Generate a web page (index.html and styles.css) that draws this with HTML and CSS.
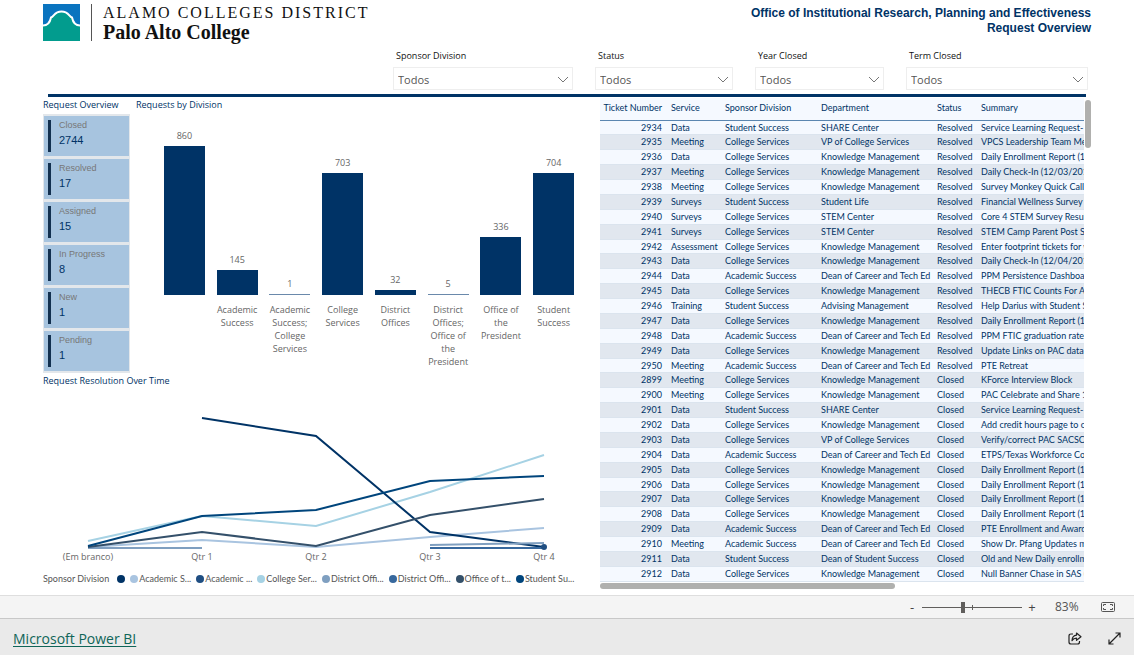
FILE: index.html
```html
<!DOCTYPE html>
<html lang="en">
<head>
<meta charset="utf-8">
<meta name="viewport" content="width=device-width, initial-scale=1">
<title>Request Overview</title>
<link rel="stylesheet" href="styles.css">
</head>
<body>
<main class="report">
  <header class="header">
    <div class="brand">
      <svg class="brand-mark" viewBox="0 0 37 37" aria-hidden="true">
        <rect width="37" height="37" fill="#0a74bf"/>
        <path d="M0 37V21.500C5 21.500 7 18.500 8 13.500C11 12.500 11.500 7.500 18.500 7.500S26 12.500 29 13.500C30 18.500 32 21.500 37 21.500V37Z" fill="#029c8e"/>
        <path d="M0 21.500C5 21.500 7 18.500 8 13.500C11 12.500 11.500 7.500 18.500 7.500S26 12.500 29 13.500C30 18.500 32 21.500 37 21.500" fill="none" stroke="#fff" stroke-width="2"/>
      </svg>
      <div class="brand-text">
        <span class="brand-district">ALAMO COLLEGES DISTRICT</span>
        <span class="brand-college">Palo Alto College</span>
      </div>
    </div>
    <h1 class="title">Office of Institutional Research, Planning and Effectiveness<br>Request Overview</h1>
  </header>

  <form class="filters">
    <div class="filter">
      <label for="f-division">Sponsor Division</label>
      <div class="picker"><select id="f-division"><option>Todos</option></select><svg class="chevron" viewBox="0 0 12 7" aria-hidden="true"><path d="M1 1l5 5 5-5"/></svg></div>
    </div>
    <div class="filter">
      <label for="f-status">Status</label>
      <div class="picker"><select id="f-status"><option>Todos</option></select><svg class="chevron" viewBox="0 0 12 7" aria-hidden="true"><path d="M1 1l5 5 5-5"/></svg></div>
    </div>
    <div class="filter">
      <label for="f-year">Year Closed</label>
      <div class="picker"><select id="f-year"><option>Todos</option></select><svg class="chevron" viewBox="0 0 12 7" aria-hidden="true"><path d="M1 1l5 5 5-5"/></svg></div>
    </div>
    <div class="filter">
      <label for="f-term">Term Closed</label>
      <div class="picker"><select id="f-term"><option>Todos</option></select><svg class="chevron" viewBox="0 0 12 7" aria-hidden="true"><path d="M1 1l5 5 5-5"/></svg></div>
    </div>
  </form>

  <div class="rule"></div>

  <div class="content">
    <div class="charts">
      <div class="top-row">
        <section class="overview">
          <h2>Request Overview</h2>
          <div class="cards">
            <div class="card"><span class="card-label">Closed</span><span class="card-value">2744</span></div>
            <div class="card"><span class="card-label">Resolved</span><span class="card-value">17</span></div>
            <div class="card"><span class="card-label">Assigned</span><span class="card-value">15</span></div>
            <div class="card"><span class="card-label">In Progress</span><span class="card-value">8</span></div>
            <div class="card"><span class="card-label">New</span><span class="card-value">1</span></div>
            <div class="card"><span class="card-label">Pending</span><span class="card-value">1</span></div>
          </div>
        </section>
        <section class="division">
          <h2>Requests by Division</h2>
          <div class="bars">
            <div class="bar-col"><span>860</span><div class="bar" style="height:149px"></div></div>
            <div class="bar-col"><span>145</span><div class="bar" style="height:25px"></div></div>
            <div class="bar-col"><span>1</span><div class="bar bar-thin" style="height:1px"></div></div>
            <div class="bar-col"><span>703</span><div class="bar" style="height:122px"></div></div>
            <div class="bar-col"><span>32</span><div class="bar" style="height:5px"></div></div>
            <div class="bar-col"><span>5</span><div class="bar bar-thin" style="height:1px"></div></div>
            <div class="bar-col"><span>336</span><div class="bar" style="height:58px"></div></div>
            <div class="bar-col"><span>704</span><div class="bar" style="height:122px"></div></div>
          </div>
          <div class="bar-labels">
            <span></span>
            <span>Academic<br>Success</span>
            <span>Academic<br>Success;<br>College<br>Services</span>
            <span>College<br>Services</span>
            <span>District<br>Offices</span>
            <span>District<br>Offices;<br>Office of<br>the<br>President</span>
            <span>Office of<br>the<br>President</span>
            <span>Student<br>Success</span>
          </div>
        </section>
      </div>

      <section class="trend">
        <h2>Request Resolution Over Time</h2>
        <div class="plot">
          <svg class="lines" viewBox="0 0 570 162" preserveAspectRatio="none" role="img" aria-label="Requests per quarter by sponsor division">
            <polyline points="57,159 171,152 285,159 399,149 513,140" stroke="#a9c4e0"/>
            <polyline points="57,153 171,128 285,138 399,104 513,67" stroke="#a6d2e4"/>
            <polyline points="171,30 285,48 399,144 513,159" stroke="#003366"/>
            <polyline points="57,160 171,160" stroke="#7f9fc0"/>
            <polyline points="399,157 513,155" stroke="#7f9fc0"/>
            <polyline points="399,160 513,160" stroke="#37689d"/>
            <polyline points="57,159 171,144 285,158 399,127 513,111" stroke="#34506a"/>
            <polyline points="57,158 171,128 285,122 399,93 513,88" stroke="#00457c"/>
            <circle cx="513" cy="159" r="3" fill="#1f4e82"/>
          </svg>
          <div class="axis"><span>(Em branco)</span><span>Qtr 1</span><span>Qtr 2</span><span>Qtr 3</span><span>Qtr 4</span></div>
        </div>
        <div class="legend">
          <span class="legend-title">Sponsor Division</span>
          <ul>
            <li class="c1"></li>
            <li class="c2">Academic S...</li>
            <li class="c3">Academic ...</li>
            <li class="c4">College Ser...</li>
            <li class="c5">District Offi...</li>
            <li class="c6">District Offi...</li>
            <li class="c7">Office of t...</li>
            <li class="c8">Student Su...</li>
          </ul>
        </div>
      </section>
    </div>

    <section class="tickets">
      <div class="table-box">
        <table>
          <colgroup><col class="w-ticket"><col class="w-service"><col class="w-division"><col class="w-dept"><col class="w-status"><col class="w-summary"></colgroup>
          <thead><tr><th>Ticket Number</th><th>Service</th><th>Sponsor Division</th><th>Department</th><th>Status</th><th>Summary</th></tr></thead>
          <tbody>
            <tr><td>2934</td><td>Data</td><td>Student Success</td><td>SHARE Center</td><td>Resolved</td><td>Service Learning Request-</td></tr>
            <tr><td>2935</td><td>Meeting</td><td>College Services</td><td>VP of College Services</td><td>Resolved</td><td>VPCS Leadership Team Me</td></tr>
            <tr><td>2936</td><td>Data</td><td>College Services</td><td>Knowledge Management</td><td>Resolved</td><td>Daily Enrollment Report (1</td></tr>
            <tr><td>2937</td><td>Meeting</td><td>College Services</td><td>Knowledge Management</td><td>Resolved</td><td>Daily Check-In (12/03/2018</td></tr>
            <tr><td>2938</td><td>Meeting</td><td>College Services</td><td>Knowledge Management</td><td>Resolved</td><td>Survey Monkey Quick Call</td></tr>
            <tr><td>2939</td><td>Surveys</td><td>Student Success</td><td>Student Life</td><td>Resolved</td><td>Financial Wellness Survey R</td></tr>
            <tr><td>2940</td><td>Surveys</td><td>College Services</td><td>STEM Center</td><td>Resolved</td><td>Core 4 STEM Survey Result</td></tr>
            <tr><td>2941</td><td>Surveys</td><td>College Services</td><td>STEM Center</td><td>Resolved</td><td>STEM Camp Parent Post Su</td></tr>
            <tr><td>2942</td><td>Assessment</td><td>College Services</td><td>Knowledge Management</td><td>Resolved</td><td>Enter footprint tickets for w</td></tr>
            <tr><td>2943</td><td>Data</td><td>College Services</td><td>Knowledge Management</td><td>Resolved</td><td>Daily Check-In (12/04/2018</td></tr>
            <tr><td>2944</td><td>Data</td><td>Academic Success</td><td>Dean of Career and Tech Ed</td><td>Resolved</td><td>PPM Persistence Dashboar</td></tr>
            <tr><td>2945</td><td>Data</td><td>College Services</td><td>Knowledge Management</td><td>Resolved</td><td>THECB FTIC Counts For AC</td></tr>
            <tr><td>2946</td><td>Training</td><td>Student Success</td><td>Advising Management</td><td>Resolved</td><td>Help Darius with Student S</td></tr>
            <tr><td>2947</td><td>Data</td><td>College Services</td><td>Knowledge Management</td><td>Resolved</td><td>Daily Enrollment Report (1</td></tr>
            <tr><td>2948</td><td>Data</td><td>Academic Success</td><td>Dean of Career and Tech Ed</td><td>Resolved</td><td>PPM FTIC graduation rates</td></tr>
            <tr><td>2949</td><td>Data</td><td>College Services</td><td>Knowledge Management</td><td>Resolved</td><td>Update Links on PAC data</td></tr>
            <tr><td>2950</td><td>Meeting</td><td>Academic Success</td><td>Dean of Career and Tech Ed</td><td>Resolved</td><td>PTE Retreat</td></tr>
            <tr><td>2899</td><td>Meeting</td><td>College Services</td><td>Knowledge Management</td><td>Closed</td><td>KForce Interview Block</td></tr>
            <tr><td>2900</td><td>Meeting</td><td>College Services</td><td>Knowledge Management</td><td>Closed</td><td>PAC Celebrate and Share 1</td></tr>
            <tr><td>2901</td><td>Data</td><td>Student Success</td><td>SHARE Center</td><td>Closed</td><td>Service Learning Request-</td></tr>
            <tr><td>2902</td><td>Data</td><td>College Services</td><td>Knowledge Management</td><td>Closed</td><td>Add credit hours page to c</td></tr>
            <tr><td>2903</td><td>Data</td><td>College Services</td><td>VP of College Services</td><td>Closed</td><td>Verify/correct PAC SACSCC</td></tr>
            <tr><td>2904</td><td>Data</td><td>Academic Success</td><td>Dean of Career and Tech Ed</td><td>Closed</td><td>ETPS/Texas Workforce Con</td></tr>
            <tr><td>2905</td><td>Data</td><td>College Services</td><td>Knowledge Management</td><td>Closed</td><td>Daily Enrollment Report (1</td></tr>
            <tr><td>2906</td><td>Data</td><td>College Services</td><td>Knowledge Management</td><td>Closed</td><td>Daily Enrollment Report (1</td></tr>
            <tr><td>2907</td><td>Data</td><td>College Services</td><td>Knowledge Management</td><td>Closed</td><td>Daily Enrollment Report (1</td></tr>
            <tr><td>2908</td><td>Data</td><td>College Services</td><td>Knowledge Management</td><td>Closed</td><td>Daily Enrollment Report (1</td></tr>
            <tr><td>2909</td><td>Data</td><td>Academic Success</td><td>Dean of Career and Tech Ed</td><td>Closed</td><td>PTE Enrollment and Award</td></tr>
            <tr><td>2910</td><td>Meeting</td><td>Academic Success</td><td>Dean of Career and Tech Ed</td><td>Closed</td><td>Show Dr. Pfang Updates m</td></tr>
            <tr><td>2911</td><td>Data</td><td>Student Success</td><td>Dean of Student Success</td><td>Closed</td><td>Old and New Daily enrollm</td></tr>
            <tr><td>2912</td><td>Data</td><td>College Services</td><td>Knowledge Management</td><td>Closed</td><td>Null Banner Chase in SAS (</td></tr>
          </tbody>
        </table>
      </div>
      <div class="scroll-y"></div>
      <div class="scroll-x"></div>
    </section>
  </div>
</main>

<div class="zoombar">
  <button type="button" aria-label="Zoom out">-</button>
  <div class="slider"><input type="range" min="0" max="100" value="41" aria-label="Zoom"><i class="tick"></i></div>
  <button type="button" aria-label="Zoom in">+</button>
  <span class="zoom-value">83%</span>
  <button type="button" class="fit" aria-label="Fit to page">
    <svg width="14" height="10" viewBox="0 0 14 10" fill="none" stroke="#555"><rect x=".5" y=".5" width="13" height="9" rx="1"/><path d="M5 2.500H2.500V4M9 2.500h2.500V4M5 7.500H2.500V6M9 7.500h2.500V6"/></svg>
  </button>
</div>

<footer class="footer">
  <a href="#">Microsoft Power BI</a>
  <div class="actions">
    <button type="button" aria-label="Share">
      <svg width="14" height="13" viewBox="0 0 14 13" fill="none" stroke="#222" stroke-width="1.200" stroke-linejoin="round"><path d="M5 2H3Q1 2 1 4v6q0 2 2 2h6.500q2 0 2-2V9"/><path d="M8.500 1l4.500 3.700L8.500 8.300V6.200Q5.500 6.200 4 8.700 4.300 3.500 8.500 3.200Z"/></svg>
    </button>
    <button type="button" aria-label="Full screen">
      <svg width="13" height="13" viewBox="0 0 13 13" fill="none" stroke="#222" stroke-width="1.200"><path d="M1 12L12 1M7.500 1H12v4.500M1 7.500V12h4.500"/></svg>
    </button>
  </div>
</footer>
</body>
</html>
```
FILE: styles.css
```css
* { box-sizing: border-box; }

body {
  margin: 0;
  min-height: 100vh;
  display: flex;
  flex-direction: column;
  background: #fff;
  color: #003366;
  font-family: "Open Sans", "Noto Sans", sans-serif;
  font-size: 9px;
}

h1, h2, ul { margin: 0; padding: 0; }
h2 { font-size: 9px; font-weight: 400; line-height: 14px; white-space: nowrap; }

button {
  border: 0;
  padding: 0;
  background: none;
  color: #444;
  font-family: inherit;
  display: flex;
  align-items: center;
  justify-content: center;
}

.report { flex: 1; padding: 4px 43px 0; }

/* Header */
.header { display: flex; justify-content: space-between; height: 46px; }
.brand { display: flex; align-items: flex-start; }
.brand-mark { width: 37px; height: 37px; }
.brand-text {
  display: flex;
  flex-direction: column;
  height: 37px;
  margin-left: 11px;
  padding-left: 11px;
  border-left: 1px solid #555;
  color: #111;
  font-family: "Liberation Serif", serif;
  white-space: nowrap;
}
.brand-district { font-size: 16px; line-height: 17px; letter-spacing: 2px; }
.brand-college { font-size: 20px; line-height: 22px; font-weight: 700; }
.title {
  font-family: "Liberation Sans", sans-serif;
  font-size: 12px;
  line-height: 15px;
  padding-top: 2px;
  text-align: right;
}

/* Filters */
.filters {
  display: grid;
  grid-template-columns: 180fr 138fr 129fr 182fr;
  column-gap: 22px;
  margin: 0 3px 0 350px;
}
.filter label {
  display: block;
  padding-left: 3px;
  color: #111;
  line-height: 12px;
  margin-bottom: 5px;
}
.picker { position: relative; }
.picker select {
  display: block;
  width: 100%;
  height: 23px;
  padding: 2px 4px 0;
  border: 1px solid #eee;
  border-radius: 0;
  appearance: none;
  background: #fff;
  color: #555;
  font-family: inherit;
  font-size: 11px;
}
.chevron {
  position: absolute;
  right: 4px;
  top: 9px;
  width: 12px;
  height: 7px;
  fill: none;
  stroke: #777;
  pointer-events: none;
}
.rule { height: 3px; margin: 4px 5px 0; background: #003366; }

/* Content */
.content {
  display: grid;
  grid-template-columns: 532fr 491fr;
  column-gap: 25px;
  padding-top: 1px;
}
.charts, .overview, .division, .tickets { min-width: 0; }
.top-row { display: grid; grid-template-columns: 87px 1fr; column-gap: 6px; }

.cards { background: #e3e7eb; padding: 0 1px 1px; margin-top: 2px; }
.card {
  display: flex;
  flex-direction: column;
  position: relative;
  height: 43px;
  padding: 4px 0 0 15px;
  background: #a7c4df;
  border: solid #e3e7eb;
  border-width: 2px 0 1px;
}
.card::before {
  content: "";
  position: absolute;
  left: 4px;
  top: 4px;
  bottom: 4px;
  width: 3px;
  background: #12304f;
}
.card-label, .card-value { font-family: "Liberation Sans", sans-serif; }
.card-label { color: #777; font-size: 9px; line-height: 11px; }
.card-value { font-size: 11px; line-height: 18px; }

.bars, .bar-labels {
  display: grid;
  grid-template-columns: repeat(8, 1fr);
  margin: 0 -5px 0 22px;
  text-align: center;
  color: #666;
}
.bars { height: 183px; align-items: end; }
.bar-col span { display: block; line-height: 12px; margin-bottom: 4px; }
.bar { width: 78%; margin: 0 auto; background: #003366; }
.bar-thin { background: #6a89ab; }
.bar-labels { line-height: 13px; padding-top: 8px; white-space: nowrap; min-height: 78px; }

/* Trend */
.trend h2 { margin-top: 1px; }
.plot { margin: 0 -26px 0 -12px; }
.lines { display: block; width: 100%; height: 162px; }
.lines polyline { fill: none; stroke-width: 2; vector-effect: non-scaling-stroke; }
.axis {
  display: grid;
  grid-template-columns: repeat(5, 1fr);
  line-height: 14px;
  text-align: center;
  color: #666;
}
.legend {
  display: flex;
  gap: 8px;
  margin-top: 8px;
  color: #555;
  font-family: Lato, "Open Sans", sans-serif;
  font-size: 9px;
  line-height: 14px;
  white-space: nowrap;
}
.legend ul { display: flex; gap: 5px; list-style: none; }
.legend li { display: flex; align-items: center; gap: 1px; }
.legend li::before { content: ""; width: 8px; height: 8px; border-radius: 50%; background: currentColor; }
.legend .c1::before { background: #003366; }
.legend .c2::before { background: #a9c4e0; }
.legend .c3::before { background: #1f4e82; }
.legend .c4::before { background: #a6d2e4; }
.legend .c5::before { background: #7f9fc0; }
.legend .c6::before { background: #37689d; }
.legend .c7::before { background: #34506a; }
.legend .c8::before { background: #00457c; }

/* Ticket table */
.tickets {
  display: grid;
  grid-template-columns: 1fr 6px;
  column-gap: 1px;
  align-content: start;
}
.table-box { overflow: hidden; }
table {
  width: 100%;
  table-layout: fixed;
  border-collapse: separate;
  border-spacing: 0;
  font-family: Lato, "Open Sans", sans-serif;
  font-size: 9px;
}
.w-ticket { width: 66px; }
.w-service { width: 54px; }
.w-division { width: 96px; }
.w-dept { width: 116px; }
.w-status { width: 44px; }
th, td { padding: 0 0 0 5px; text-align: left; white-space: nowrap; overflow: hidden; font-weight: 400; }
th:first-child, td:first-child { padding: 0 4px 0 0; text-align: right; }
th, th:first-child { height: 23px; padding-bottom: 3px; background: #f5f9ff; border-bottom: 1px solid #5b86b0; }
td { height: 15px; line-height: 14px; background: #f5f9ff; border-bottom: 1px solid #dbe4ee; }
tr:nth-child(even) td { background: #e1e7ef; }
tbody tr:nth-child(8n+1) td { height: 14px; line-height: 13px; }
.scroll-y { width: 6px; height: 48px; margin-top: 2px; border-radius: 3px; background: #b0b0ae; }
.scroll-x { width: 61%; height: 6px; margin-top: 1px; border-radius: 3px; background: #b0b0ae; }

/* Zoom bar and footer */
.zoombar {
  display: flex;
  align-items: center;
  justify-content: flex-end;
  height: 23px;
  padding-right: 19px;
  background: #f4f4f4;
  border-top: 1px solid #dedede;
}
.zoombar button { font-size: 13px; line-height: 20px; width: 14px; }
.slider { position: relative; width: 100px; margin: 0 3px; display: flex; }
.slider input {
  appearance: none;
  width: 100%;
  height: 12px;
  margin: 0;
  background: linear-gradient(#605e5c, #605e5c) center / 100% 1px no-repeat;
}
.slider input::-webkit-slider-thumb { appearance: none; width: 4px; height: 11px; background: #605e5c; }
.tick { position: absolute; left: 50%; top: 4px; width: 1px; height: 5px; background: #605e5c; }
.zoom-value { width: 24px; margin: 0 22px 0 16px; font-size: 12px; line-height: 16px; color: #555; }

.footer {
  display: flex;
  align-items: center;
  justify-content: space-between;
  height: 37px;
  padding: 3px 13px 0;
  background: #eaeaea;
  border-top: 1px solid #c8c8c8;
}
.footer a { font-size: 14px; color: #0f6558; text-underline-offset: 2px; }
.actions { display: flex; gap: 26px; }
```
